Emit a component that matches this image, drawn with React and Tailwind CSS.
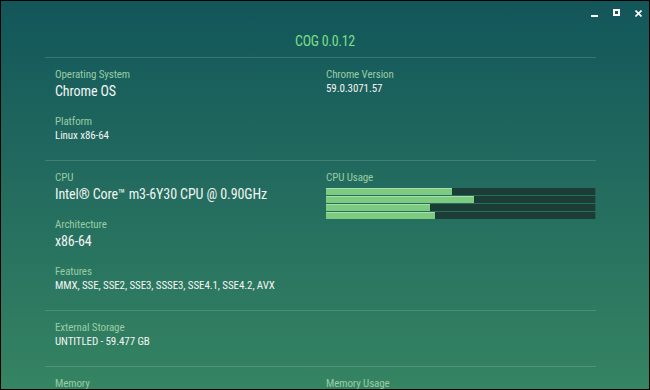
import React from 'react';

const cores = [46.7, 55.2, 38.5, 40.4];

function Label({ children }) {
  return <div className="text-[11px] leading-[15px] text-[#98cca4]">{children}</div>;
}

function Big({ children }) {
  return <div className="text-[14px] leading-[18px] text-[#f2f5f3]">{children}</div>;
}

function Small({ children }) {
  return <div className="text-[11px] leading-[14px] text-[#f2f5f3]">{children}</div>;
}

function Section({ left, right, last }) {
  return (
    <div className={"grid grid-cols-[271px_1fr] pl-[10px] pt-[9px] pb-[17px] " + (last ? '' : 'border-b border-white/15')}>
      <div className="flex flex-col gap-[14px]">{left}</div>
      <div className="flex flex-col gap-[14px]">{right}</div>
    </div>
  );
}

export default function App() {
  return (
    <div className="w-[650px] h-[390px] overflow-hidden border border-black bg-gradient-to-b from-[#12565a] to-[#358462] font-['Roboto',sans-serif] [font-stretch:condensed] tracking-[-0.1px] relative">
      <div className="absolute top-[8px] right-[7px] flex items-start gap-[15px]">
        <div className="w-[7px] h-[2px] bg-white mt-[6px]" />
        <div className="w-[7px] h-[7px] border-2 border-white" />
        <svg width="7" height="7" viewBox="0 0 7 7" className="mt-[1px]">
          <path d="M0.5 0.5L6.5 6.5M6.5 0.5L0.5 6.5" stroke="white" strokeWidth="1.6" />
        </svg>
      </div>

      <div className="pt-[31px] pb-[7px] text-center text-[14px] leading-[18px] tracking-[-0.3px] text-[#7ddf86]">COG 0.0.12</div>

      <div className="ml-[44px] w-[551px] border-t border-white/15">
        <Section
          left={<>
            <div><Label>Operating System</Label><Big>Chrome OS</Big></div>
            <div><Label>Platform</Label><Small>Linux x86-64</Small></div>
          </>}
          right={<div><Label>Chrome Version</Label><Small>59.0.3071.57</Small></div>}
        />
        <Section
          left={<>
            <div><Label>CPU</Label><Big>Intel® Core™ m3-6Y30 CPU @ 0.90GHz</Big></div>
            <div><Label>Architecture</Label><Big>x86-64</Big></div>
            <div><Label>Features</Label><Small>MMX, SSE, SSE2, SSE3, SSSE3, SSE4.1, SSE4.2, AVX</Small></div>
          </>}
          right={<div>
            <Label>CPU Usage</Label>
            <div className="mt-[3px] flex flex-col gap-[1px]">
              {cores.map((c, i) => (
                <div key={i} className="h-[7px] bg-[#1b3d35] border-r border-[#2a5c4e]">
                  <div className="h-full bg-[#7dcb80] border-t border-[#a6e0a6]" style={{ width: c + '%' }} />
                </div>
              ))}
            </div>
          </div>}
        />
        <Section
          left={<div><Label>External Storage</Label><Small>UNTITLED - 59.477 GB</Small></div>}
          right={null}
        />
        <Section
          last
          left={<div><Label>Memory</Label></div>}
          right={<div><Label>Memory Usage</Label></div>}
        />
      </div>
    </div>
  );
}
